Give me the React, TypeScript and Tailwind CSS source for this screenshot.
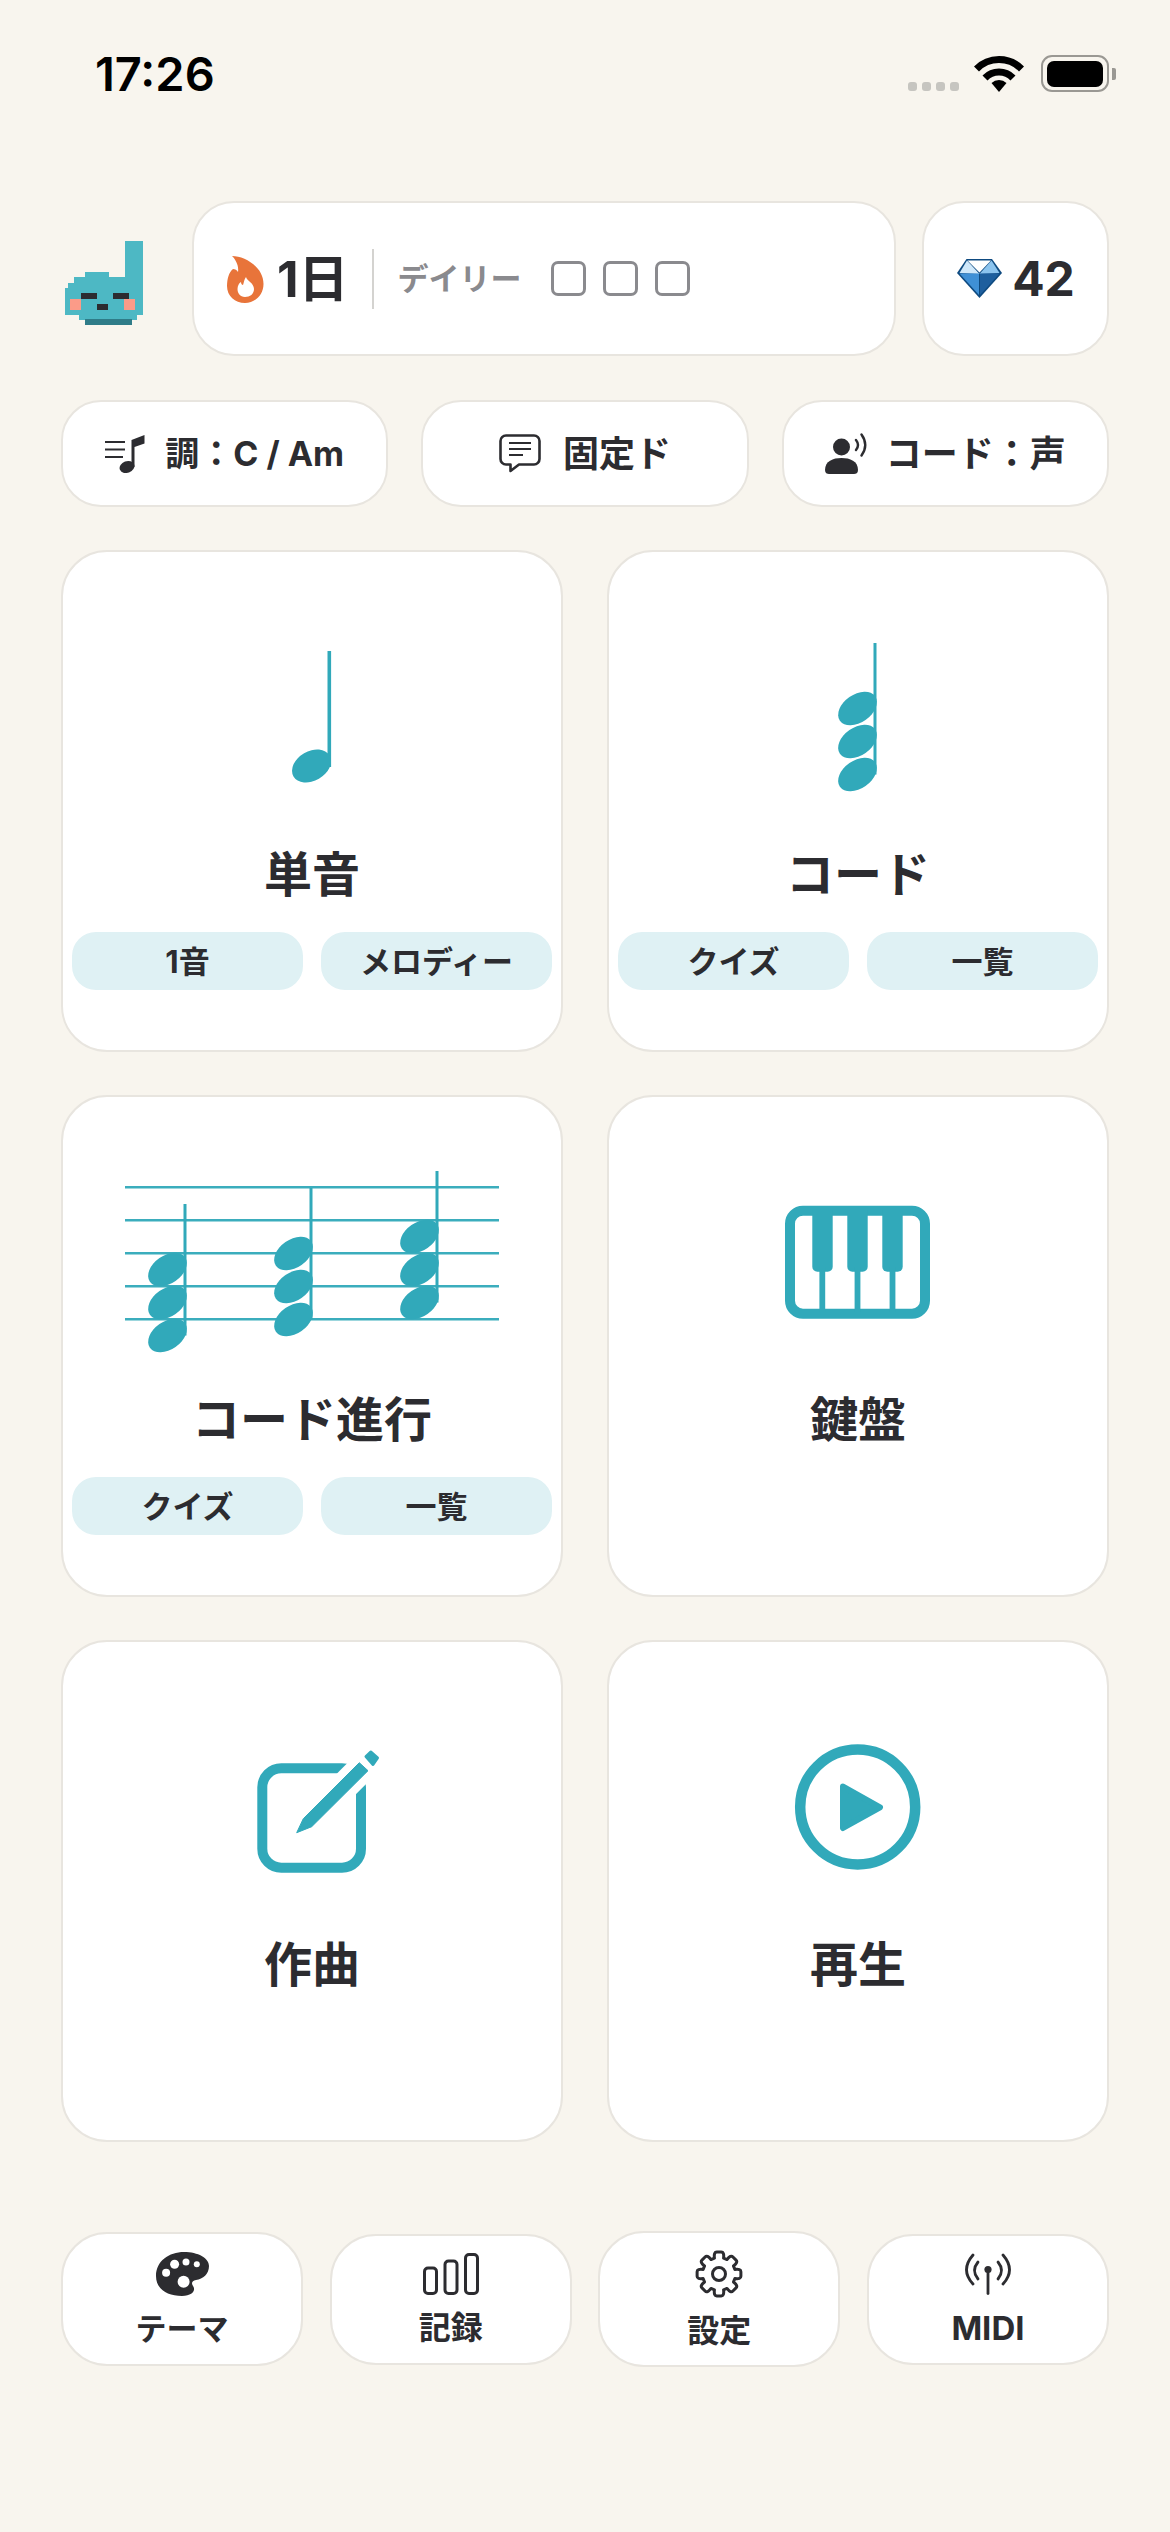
import type { ReactNode } from 'react';

const TEAL = '#31a9ba';
const INK = '#2c2c30';

// 音符の玉（傾いた楕円）
function NoteHead({ x, y }: { x: number; y: number }) {
  return <ellipse cx={x} cy={y} rx={21.5} ry={14} transform={`rotate(-35 ${x} ${y})`} fill={TEAL} />;
}

function Chord({ x, ys, stemTop }: { x: number; ys: number[]; stemTop: number }) {
  const bottom = ys[ys.length - 1];
  return (
    <g>
      <rect x={x + 16} y={stemTop} width={3} height={bottom - stemTop} fill={TEAL} />
      {ys.map((y) => (
        <NoteHead key={y} x={x} y={y} />
      ))}
    </g>
  );
}

function IconFrame({ children }: { children: ReactNode }) {
  return (
    <svg width="498" height="291" viewBox="0 0 498 291" className="block">
      {children}
    </svg>
  );
}

function SingleNoteIcon() {
  return (
    <IconFrame>
      <rect x={264.5} y={99} width={3.6} height={116} fill={TEAL} />
      <ellipse cx={248.5} cy={214} rx={20.8} ry={14.8} transform="rotate(-30 248.5 214)" fill={TEAL} />
    </IconFrame>
  );
}

function ChordIcon() {
  return (
    <IconFrame>
      <Chord x={248.5} ys={[156.5, 189.5, 222.5]} stemTop={91} />
    </IconFrame>
  );
}

function ProgressionIcon() {
  return (
    <IconFrame>
      {[90.3, 123.3, 156.3, 189.3, 222.3].map((y) => (
        <line key={y} x1={62} x2={436} y1={y} y2={y} stroke={TEAL} strokeWidth={2.5} opacity={0.95} />
      ))}
      <Chord x={104.5} ys={[172.5, 205.5, 238.5]} stemTop={107} />
      <Chord x={230.5} ys={[156.5, 189.5, 222.5]} stemTop={91} />
      <Chord x={356.5} ys={[139.5, 172.5, 205.5]} stemTop={74} />
    </IconFrame>
  );
}

function PianoIcon() {
  return (
    <IconFrame>
      <rect x={181} y={113.7} width={135} height={103} rx={13} fill="none" stroke={TEAL} strokeWidth={10} />
      {[203.3, 238.3, 273.3].map((x) => (
        <path
          key={x}
          d={`M${x} 113 h20.4 v56.7 a5 5 0 0 1 -5 5 h-10.4 a5 5 0 0 1 -5 -5 z`}
          fill={TEAL}
        />
      ))}
      {[213.3, 248.5, 283.5].map((x) => (
        <rect key={x} x={x - 2.9} y={170} width={5.8} height={45} fill={TEAL} />
      ))}
    </IconFrame>
  );
}

function ComposeIcon() {
  return (
    <IconFrame>
      <rect x={199.3} y={126.3} width={98.7} height={99.4} rx={19} fill="none" stroke={TEAL} strokeWidth={10} />
      <line x1={267} y1={158.3} x2={310.3} y2={115} stroke="#ffffff" strokeWidth={28} />
      <path d="M233.7 190.7 L240.3 176.7 L296.3 120.7 L305 128.7 L248.7 184.7 Z" fill={TEAL} stroke={TEAL} strokeLinejoin="round" strokeWidth={1} />
      <path d="M303 114.5 L307.7 110 L314.5 115.8 L310 122.5 Z" fill={TEAL} stroke={TEAL} strokeLinejoin="round" strokeWidth={3} />
    </IconFrame>
  );
}

function PlayIcon() {
  return (
    <IconFrame>
      <circle cx={248.7} cy={165} r={57.5} fill="none" stroke={TEAL} strokeWidth={10.5} />
      <path d="M234 144.5 L271 165.3 L234 186 Z" fill={TEAL} stroke={TEAL} strokeWidth={6} strokeLinejoin="round" />
    </IconFrame>
  );
}

function Mascot() {
  const teal = '#4db8c4';
  return (
    <svg width="78" height="84" viewBox="0 0 78 84" shapeRendering="crispEdges" className="ml-[4px] mt-[9px] block">
      <rect x={59.6} y={0} width={18.4} height={37} fill={teal} />
      <rect x={20.4} y={30.7} width={23.6} height={6} fill={teal} />
      <rect x={9.3} y={36.3} width={68.7} height={6} fill={teal} />
      <rect x={3} y={41.7} width={75} height={6} fill={teal} />
      <rect x={0} y={47.3} width={78} height={27} fill={teal} />
      <rect x={14.3} y={74} width={57.8} height={5} fill={teal} />
      <rect x={20.4} y={78.3} width={46.4} height={5.7} fill="#2f7c88" />
      <rect x={16} y={52.3} width={16} height={5.7} fill={INK} />
      <rect x={48.2} y={52.3} width={16.1} height={5.7} fill={INK} />
      <rect x={32.1} y={63.3} width={10.8} height={5.4} fill={INK} />
      <rect x={5.4} y={58} width={10.6} height={10.7} fill="#fb9b88" />
      <rect x={59} y={58} width={11} height={10.7} fill="#fb9b88" />
    </svg>
  );
}

function Flame() {
  return (
    <svg width="37" height="48" viewBox="0 0 37 48" className="block">
      <path
        d="M5 1 C18 1 36.5 12 36.5 29 C36.5 40 28 48 18 48 C8 48 0 41 0 31 C0 24 2 17 6 14 C8 14 10 15 11 17 C12 11 9 5 5 1 Z"
        fill="#e8743a"
      />
      <path
        d="M19 22 C20 26 27 28 27 34 C27 39 23 42 18 42 C13 42 10.5 38 10.5 34 C10.5 31 12 28 14 27 C14 29 15 30 16 30 C17 27 17 25 19 22 Z"
        fill="#ffffff"
      />
    </svg>
  );
}

function Gem() {
  return (
    <svg width="47" height="41" viewBox="0 0 47 41" className="block">
      <path d="M10.5 1 L36 1 L46 15 L23.5 40 L1 15 Z" fill="#0e4a80" />
      <path d="M23.5 16 L3.5 15 L11 2.5 Z" fill="#cfe8fa" />
      <path d="M23.5 16 L43.5 15 L35.5 2.5 Z" fill="#8cc4ee" />
      <path d="M11.5 2.5 L35 2.5 L23.5 14.5 Z" fill="#ffffff" />
      <path d="M3.5 15.5 L23 15.5 L23 37 Z" fill="#3f90d6" />
      <path d="M43.5 15.5 L24 15.5 L24 37 Z" fill="#1e5f9e" />
    </svg>
  );
}

function KeyIcon() {
  return (
    <svg width="40" height="38" viewBox="0 0 40 38" className="block">
      <path d="M0 7 H20 M0 14.5 H20 M0 22 H18" stroke={INK} strokeWidth={2} fill="none" />
      <path d="M26.5 5 L39.5 0 V8.5 L29.5 12 V32 H26.5 Z" fill={INK} />
      <ellipse cx={22} cy={32} rx={7.6} ry={5.8} transform="rotate(-20 22 32)" fill={INK} />
    </svg>
  );
}

function ChatIcon() {
  return (
    <svg width="42" height="39" viewBox="0 0 42 39" className="block">
      <path
        d="M7 1.5 H35 A5.5 5.5 0 0 1 40.5 7 V25 A5.5 5.5 0 0 1 35 30.5 H20 L11.5 37 V30.5 H7 A5.5 5.5 0 0 1 1.5 25 V7 A5.5 5.5 0 0 1 7 1.5 Z"
        fill="none"
        stroke={INK}
        strokeWidth={2.6}
        strokeLinejoin="round"
      />
      <path d="M10 9 H32 M10 15 H32 M10 21 H24" stroke={INK} strokeWidth={2} fill="none" />
    </svg>
  );
}

function VoiceIcon() {
  return (
    <svg width="43" height="41" viewBox="0 0 43 41" className="block">
      <circle cx={16.5} cy={14} r={8.5} fill={INK} />
      <path d="M0 37 C0 28 8 25 16.5 25 C25 25 33 28 33 37 C33 40 31 41 29 41 H4 C2 41 0 40 0 37 Z" fill={INK} />
      <path d="M31 7 Q35 12 31 17 M36.5 1.5 Q44 12 36.5 22.5" stroke={INK} strokeWidth={2.4} strokeLinecap="round" fill="none" />
    </svg>
  );
}

function PaletteIcon() {
  return (
    <svg width="53" height="44" viewBox="0 0 53 44" className="block">
      <path
        d="M0 24 C0 9 13 0 28 0 C42 0 53 6 53 14 C53 22 47 27 40 28 C36 29 35 31 37 34 C40 38 37 44 26 44 C11 44 0 37 0 24 Z"
        fill={INK}
      />
      <circle cx={10.1} cy={20.7} r={4} fill="#ffffff" />
      <circle cx={18.6} cy={12.3} r={4.5} fill="#ffffff" />
      <circle cx={30} cy={10} r={3.5} fill="#ffffff" />
      <circle cx={40.8} cy={12.3} r={3} fill="#ffffff" />
      <circle cx={27.6} cy={29.7} r={6} fill="#ffffff" />
    </svg>
  );
}

function ChartIcon() {
  return (
    <svg width="56" height="42" viewBox="0 0 56 42" fill="none" stroke={INK} strokeWidth={3} className="block">
      <rect x={1.5} y={15} width={12} height={25.5} rx={3.5} />
      <rect x={22} y={8} width={12} height={32.5} rx={3.5} />
      <rect x={42.5} y={1.5} width={12} height={39} rx={3.5} />
    </svg>
  );
}

// 歯車の外形（8枚歯）
const GEAR_PATH = (() => {
  const pts: string[] = [];
  for (let i = 0; i < 8; i++) {
    const a = (i * Math.PI) / 4 - Math.PI / 2;
    const at = (r: number, d: number) => {
      const t = a + d;
      return `${(24 + r * Math.cos(t)).toFixed(2)} ${(24 + r * Math.sin(t)).toFixed(2)}`;
    };
    pts.push(`${i === 0 ? 'M' : 'L'}${at(16.5, -0.28)}`);
    pts.push(`Q${at(22.6, -0.24)} ${at(22, -0.1)}`);
    pts.push(`L${at(22, 0.1)}`);
    pts.push(`Q${at(22.6, 0.24)} ${at(16.5, 0.28)}`);
  }
  return pts.join(' ') + ' Z';
})();

function GearIcon() {
  return (
    <svg width="48" height="48" viewBox="0 0 48 48" fill="none" stroke={INK} strokeWidth={3} strokeLinejoin="round" className="block">
      <path d={GEAR_PATH} />
      <circle cx={24} cy={24} r={6.5} />
    </svg>
  );
}

function AntennaIcon() {
  return (
    <svg width="46" height="42" viewBox="0 0 46 42" fill="none" stroke={INK} strokeWidth={2.8} strokeLinecap="round" className="block">
      <path d="M13 9 Q6 17.5 13 26 M33 9 Q40 17.5 33 26" />
      <path d="M8 2 Q-5 17 8 31 M38 2 Q51 17 38 31" />
      <path d="M23 17 V40.5" />
      <circle cx={23} cy={16.5} r={3.6} fill={INK} stroke="none" />
    </svg>
  );
}

function WifiIcon() {
  return (
    <svg width="50" height="36" viewBox="0 0 50 36" fill="none" stroke="#000000" strokeWidth={7} className="block">
      <path d="M2.5 13 A31.5 31.5 0 0 1 47.5 13" />
      <path d="M11 22 A19.5 19.5 0 0 1 39 22" />
      <path d="M25 36 L17.5 27 A11 11 0 0 1 32.5 27 Z" fill="#000000" stroke="none" />
    </svg>
  );
}

function StatusBar() {
  return (
    <div className="flex h-[201px] items-start justify-between pl-[95px] pr-[54px] pt-[51px]">
      <span className="text-[47px] font-semibold leading-[46px] text-black">17:26</span>
      <div className="flex items-end gap-[15px] pt-[4px]">
        <div className="flex gap-[5px] pb-[1px]">
          {[0, 1, 2, 3].map((i) => (
            <span key={i} className="h-[9px] w-[9px] rounded-[3px] bg-[#c6c5c0]" />
          ))}
        </div>
        <WifiIcon />
        <div className="flex items-center gap-[3px] pl-[2px]">
          <div className="flex h-[37px] w-[68px] items-center justify-center rounded-[11px] border-2 border-[#9a9893] bg-transparent">
            <div className="h-[26px] w-[56px] rounded-[7px] bg-black" />
          </div>
          <span className="h-[12px] w-[4px] rounded-r-[2px] bg-[#9a9893]" />
        </div>
      </div>
    </div>
  );
}

function Header() {
  return (
    <div className="flex h-[155px] items-stretch">
      <div className="flex w-[131px] shrink-0 items-center">
        <Mascot />
      </div>
      <div className="flex flex-1 items-center rounded-[42px] border-2 border-[#e8e5df] bg-white pl-[33px]">
        <Flame />
        <span className="ml-[13px] text-[50px] font-bold leading-none text-[#2c2c30]">1日</span>
        <span className="ml-[23px] h-[60px] w-[2px] bg-[#d4d3d0]" />
        <span className="ml-[24px] text-[31px] font-bold leading-none text-[#8a8a8e]">デイリー</span>
        <div className="ml-[29px] flex gap-[17px]">
          {[0, 1, 2].map((i) => (
            <span key={i} className="h-[35px] w-[35px] rounded-[7px] border-[3.5px] border-[#8a8a8e]" />
          ))}
        </div>
      </div>
      <div className="ml-[26px] flex w-[187px] shrink-0 items-center justify-center gap-[9px] rounded-[42px] border-2 border-[#e8e5df] bg-white">
        <Gem />
        <span className="text-[48px] font-bold leading-none text-[#2c2c30]">42</span>
      </div>
    </div>
  );
}

const OPTIONS = [
  { label: '調：C / Am', icon: <KeyIcon />, gap: 'gap-[20px]', text: 'text-[34px]' },
  { label: '固定ド', icon: <ChatIcon />, gap: 'gap-[22px]', text: 'text-[36px]' },
  { label: 'コード：声', icon: <VoiceIcon />, gap: 'gap-[18px]', text: 'text-[36px]' },
];

function OptionRow() {
  return (
    <div className="mt-[44px] grid grid-cols-3 gap-[33px]">
      {OPTIONS.map((o) => (
        <div
          key={o.label}
          className={`flex h-[107px] items-center justify-center rounded-[40px] border-2 border-[#e8e5df] bg-white ${o.gap}`}
        >
          {o.icon}
          <span className={`font-bold leading-none text-[#2c2c30] ${o.text}`}>{o.label}</span>
        </div>
      ))}
    </div>
  );
}

const MODES: { title: string; icon: ReactNode; pills?: string[] }[] = [
  { title: '単音', icon: <SingleNoteIcon />, pills: ['1音', 'メロディー'] },
  { title: 'コード', icon: <ChordIcon />, pills: ['クイズ', '一覧'] },
  { title: 'コード進行', icon: <ProgressionIcon />, pills: ['クイズ', '一覧'] },
  { title: '鍵盤', icon: <PianoIcon /> },
  { title: '作曲', icon: <ComposeIcon /> },
  { title: '再生', icon: <PlayIcon /> },
];

function ModeGrid() {
  return (
    <div className="mt-[43px] grid grid-cols-2 gap-x-[44px] gap-y-[43px]">
      {MODES.map((m) => (
        <div key={m.title} className="flex h-[502px] flex-col items-center rounded-[46px] border-2 border-[#e8e5df] bg-white">
          {m.icon}
          <h2 className="h-[64px] text-[48px] font-bold leading-[64px] text-[#2c2c30]">{m.title}</h2>
          {m.pills && (
            <div className="mt-[25px] grid w-full grid-cols-2 gap-[18px] px-[9px]">
              {m.pills.map((p) => (
                <div
                  key={p}
                  className="flex h-[58px] items-center justify-center rounded-[24px] bg-[#dff1f4] text-[31px] font-bold leading-none text-[#2c2c30]"
                >
                  {p}
                </div>
              ))}
            </div>
          )}
        </div>
      ))}
    </div>
  );
}

const NAV_ITEMS = [
  { label: 'テーマ', icon: <PaletteIcon />, box: 'h-[134px] pt-[18px]', gap: 'mt-[13px]', text: 'text-[31px]' },
  { label: '記録', icon: <ChartIcon />, box: 'h-[131px] pt-[17px]', gap: 'mt-[13px]', text: 'text-[32px]' },
  { label: '設定', icon: <GearIcon />, box: 'h-[136px] pt-[17px]', gap: 'mt-[13px]', text: 'text-[32px]' },
  { label: 'MIDI', icon: <AntennaIcon />, box: 'h-[131px] pt-[17px]', gap: 'mt-[13px]', text: 'text-[33px]' },
];

function BottomNav() {
  return (
    <div className="mt-[89px] grid h-[136px] grid-cols-4 items-center gap-[26.5px]">
      {NAV_ITEMS.map((n) => (
        <div
          key={n.label}
          className={`flex flex-col items-center rounded-[46px] border-2 border-[#e8e5df] bg-white ${n.box}`}
        >
          {n.icon}
          <span className={`font-bold leading-[40px] text-[#2c2c30] ${n.text} ${n.gap}`}>{n.label}</span>
        </div>
      ))}
    </div>
  );
}

export default function App() {
  return (
    <div className="min-h-[2532px] w-[1170px] bg-[#f8f5ee] font-[Inter,'Noto_Sans_CJK_JP',sans-serif]">
      <StatusBar />
      <div className="px-[61px]">
        <Header />
        <OptionRow />
        <ModeGrid />
        <BottomNav />
      </div>
    </div>
  );
}
